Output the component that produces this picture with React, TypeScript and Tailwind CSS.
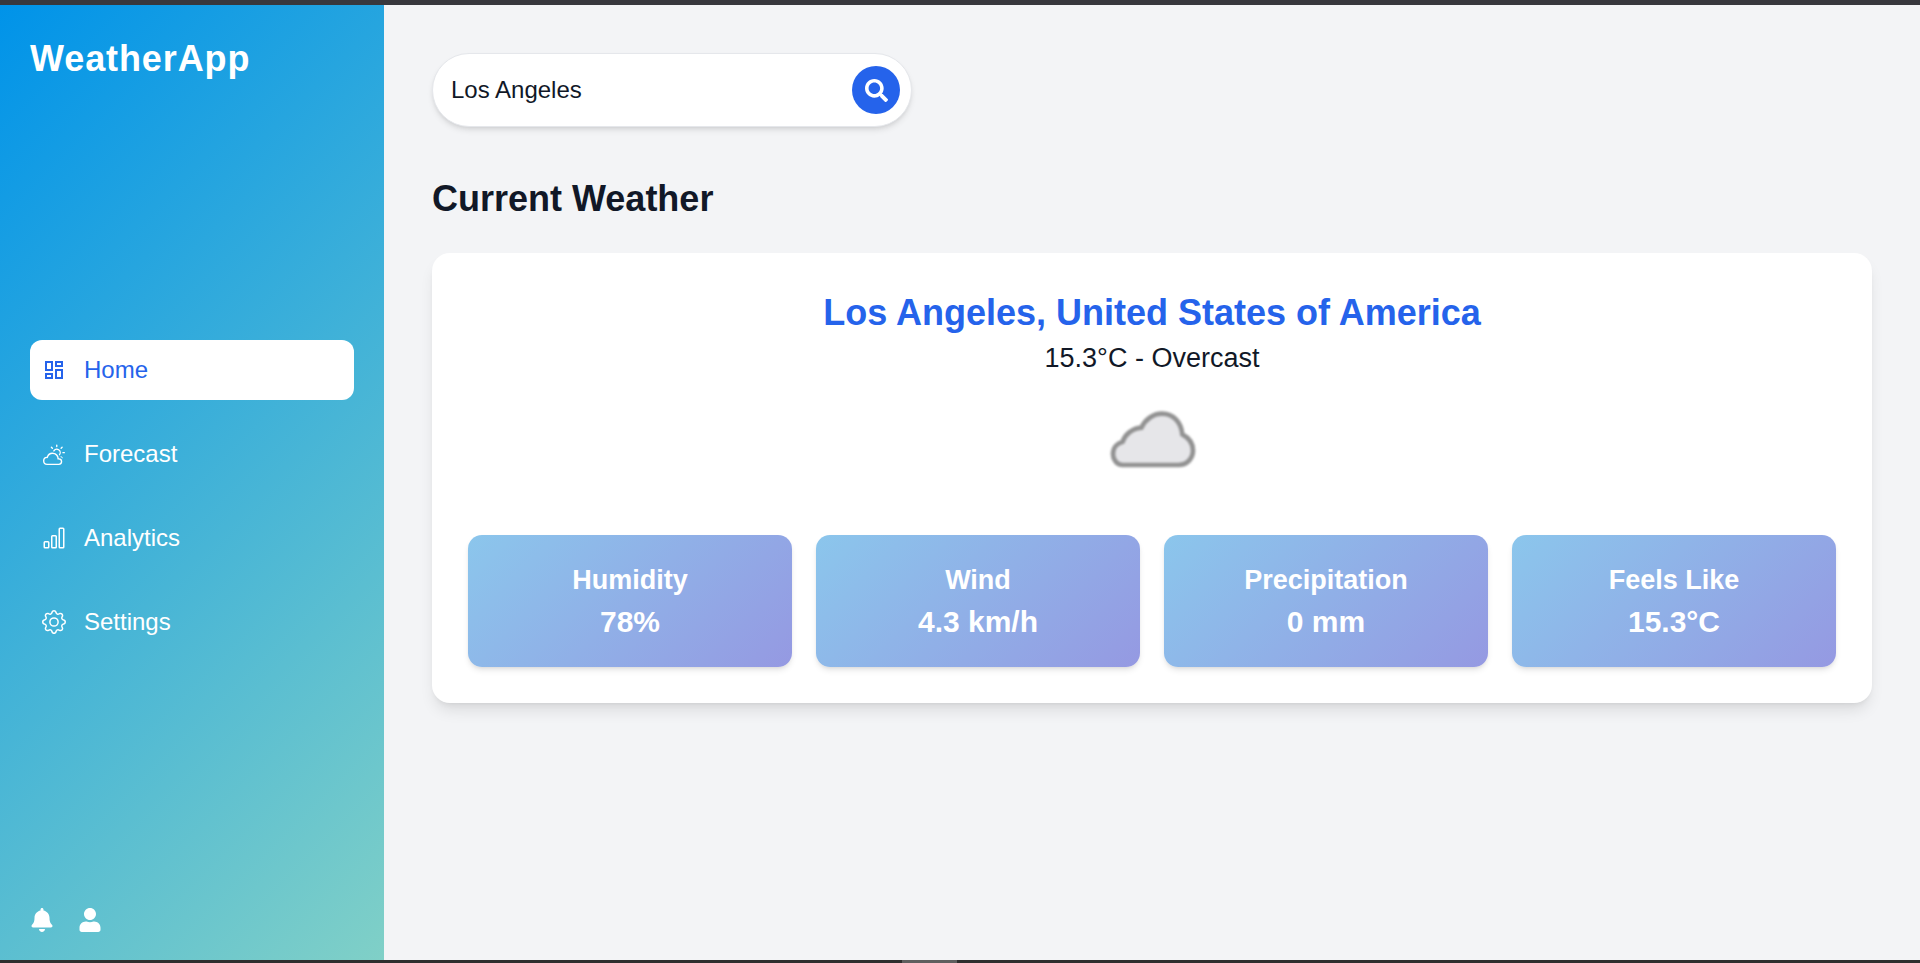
import { MdOutlineDashboard } from "react-icons/md";
import { BsCloudSun, BsBarChart, BsGear } from "react-icons/bs";
import { FaBell, FaUser, FaSearch } from "react-icons/fa";

const navItems = [
  { label: "Home", icon: MdOutlineDashboard, size: 24, active: true },
  { label: "Forecast", icon: BsCloudSun, size: 22, active: false },
  { label: "Analytics", icon: BsBarChart, size: 24, active: false },
  { label: "Settings", icon: BsGear, size: 24, active: false },
];

const stats = [
  { label: "Humidity", value: "78%" },
  { label: "Wind", value: "4.3 km/h" },
  { label: "Precipitation", value: "0 mm" },
  { label: "Feels Like", value: "15.3°C" },
];

export default function App() {
  return (
    <div className="flex h-[963px] flex-col overflow-hidden bg-[#f3f4f6] font-['Liberation_Sans',Arial,sans-serif]">
      {/* Browser chrome edge */}
      <div className="h-[5px] shrink-0 bg-[#38383d]" />

      <div className="flex min-h-0 flex-1">
        {/* Sidebar */}
        <aside className="flex w-[384px] shrink-0 flex-col justify-between bg-[linear-gradient(135deg,#0093e9,#80d0c7)] px-[30px] pt-[30px] pb-[28px] text-white">
          <h1 className="text-[36px] leading-[48px] font-bold tracking-[0.9px]">WeatherApp</h1>

          <nav className="flex flex-col gap-6">
            {navItems.map((item) => {
              const Icon = item.icon;
              return (
                <a
                  key={item.label}
                  className={
                    item.active
                      ? "flex h-[60px] items-center gap-[18px] rounded-xl bg-white px-[12px] text-[24px] text-[#2563eb]"
                      : "flex h-[60px] items-center gap-[18px] rounded-xl px-[12px] text-[24px] text-white"
                  }
                >
                  <span className="flex w-[24px] justify-center">
                    <Icon size={item.size} />
                  </span>
                  {item.label}
                </a>
              );
            })}
          </nav>

          <div className="flex items-center gap-6">
            <FaBell size={24} />
            <FaUser size={24} />
          </div>
        </aside>

        {/* Main */}
        <main className="min-w-0 flex-1 px-[48px] pt-[48px]">
          <div className="flex h-[74px] w-[480px] items-center justify-between rounded-full border border-[#e5e7eb] bg-white pr-[11px] pl-[18px] shadow-md">
            <span className="text-[24px] text-[#111827]">Los Angeles</span>
            <button className="flex h-[48px] w-[48px] items-center justify-center rounded-full bg-[#2563eb] text-white">
              <FaSearch size={23} />
            </button>
          </div>

          <h2 className="mt-[48px] text-[36px] leading-[48px] font-bold text-[#111827]">Current Weather</h2>

          <section className="mt-[30px] rounded-[18px] bg-white px-[36px] pt-[37px] pb-[36px] text-center shadow-lg">
            <h3 className="text-[36px] leading-[46px] font-bold text-[#2563eb]">
              Los Angeles, United States of America
            </h3>
            <p className="mt-[4px] text-[27px] leading-[36px] text-[#111827]">15.3°C - Overcast</p>

            <div className="mt-[15px] flex justify-center">
              <svg width="140" height="100" viewBox="0 0 420 300">
                <path
                  d="M122 222C104 222 93 205 93 190C93 170 106 156 122 152C128 132 150 112 178 110C190 85 214 68 240 68C275 68 298 95 301 130C320 140 333 155 333 178C333 205 313 222 290 222Z"
                  fill="#e6e6e9"
                  stroke="#929292"
                  strokeWidth="14"
                  style={{ filter: "blur(3px)" }}
                />
              </svg>
            </div>

            <div className="mt-[44px] grid grid-cols-4 gap-6">
              {stats.map((stat) => (
                <div
                  key={stat.label}
                  className="flex h-[132px] flex-col items-center justify-center rounded-[14px] bg-[linear-gradient(135deg,#8bc6ec,#9599e2)] pt-[2px] font-bold text-white shadow-md"
                >
                  <div className="text-[27px] leading-[40px]">{stat.label}</div>
                  <div className="text-[30px] leading-[44px]">{stat.value}</div>
                </div>
              ))}
            </div>
          </section>
        </main>
      </div>

      {/* Bottom edge with scrollbar thumb */}
      <div className="flex h-[3px] shrink-0 bg-[#2e2e2e]">
        <div className="ml-[902px] w-[55px] bg-[#5f5f5f]" />
      </div>
    </div>
  );
}
